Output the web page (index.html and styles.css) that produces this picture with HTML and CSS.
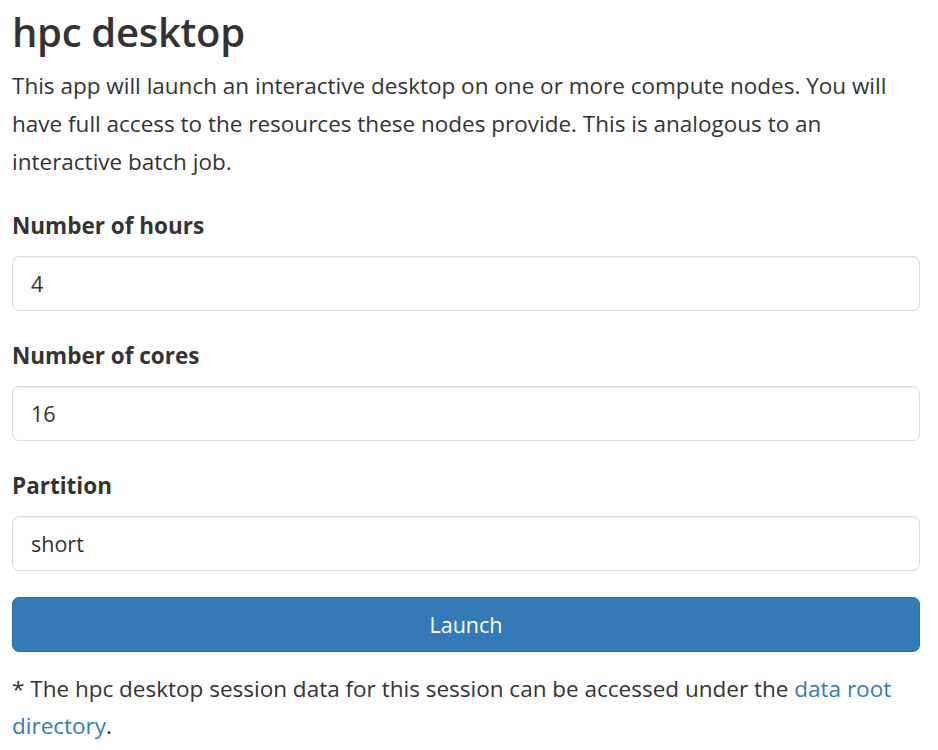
FILE: index.html
```html
<!DOCTYPE html>
<html>
<head>
<meta charset="utf-8">
<link rel="stylesheet" href="styles.css">
</head>
<body>
<div class="page">
  <h1 class="title">hpc desktop</h1>
  <p class="intro">This app will launch an interactive desktop on one or more compute nodes. You will have full access to the resources these nodes provide. This is analogous to an interactive batch job.</p>
  <form class="form">
    <div class="group">
      <label class="label">Number of hours</label>
      <input class="field" type="text" value="4">
    </div>
    <div class="group">
      <label class="label">Number of cores</label>
      <input class="field" type="text" value="16">
    </div>
    <div class="group last">
      <label class="label">Partition</label>
      <input class="field" type="text" value="short">
    </div>
    <button class="launch" type="button">Launch</button>
  </form>
  <p class="note">* The hpc desktop session data for this session can be accessed under the <a class="link" href="#">data root directory</a>.</p>
</div>
</body>
</html>
```
FILE: styles.css
```css
html, body {
  margin: 0;
  padding: 0;
  background: #fff;
}
body {
  font-family: "Open Sans", "Noto Sans", sans-serif;
  color: #333;
}
.page {
  padding: 0 18px 0 12px;
}
.title {
  margin: 8px 0 11px;
  font-size: 40px;
  line-height: 48px;
  font-weight: 600;
  letter-spacing: -0.3px;
}
.intro {
  margin: 0 0 29px;
  max-width: 885px;
  font-size: 22.5px;
  line-height: 38px;
}
.form {
  margin: 0;
}
.group {
  margin-bottom: 29px;
}
.group.last {
  margin-bottom: 26px;
}
.label {
  display: block;
  font-size: 22.5px;
  line-height: 32px;
  font-weight: 700;
  margin-bottom: 14px;
}
.field {
  display: block;
  box-sizing: border-box;
  width: 100%;
  height: 55px;
  padding: 0 18px;
  font-family: inherit;
  font-size: 21.5px;
  color: #333;
  background: #fff;
  border: 1px solid #dcdcdc;
  border-radius: 7px;
  box-shadow: inset 0 1px 1px rgba(0,0,0,0.075);
  outline: none;
}
.launch {
  display: block;
  width: 100%;
  height: 55px;
  font-family: inherit;
  font-size: 21.5px;
  color: #fff;
  background: #337ab7;
  border: 1px solid #2e6da4;
  border-radius: 7px;
  cursor: pointer;
}
.note {
  margin: 18px 0 0;
  font-size: 22.5px;
  line-height: 37px;
}
.link {
  color: #337ab7;
  text-decoration: none;
}
```
